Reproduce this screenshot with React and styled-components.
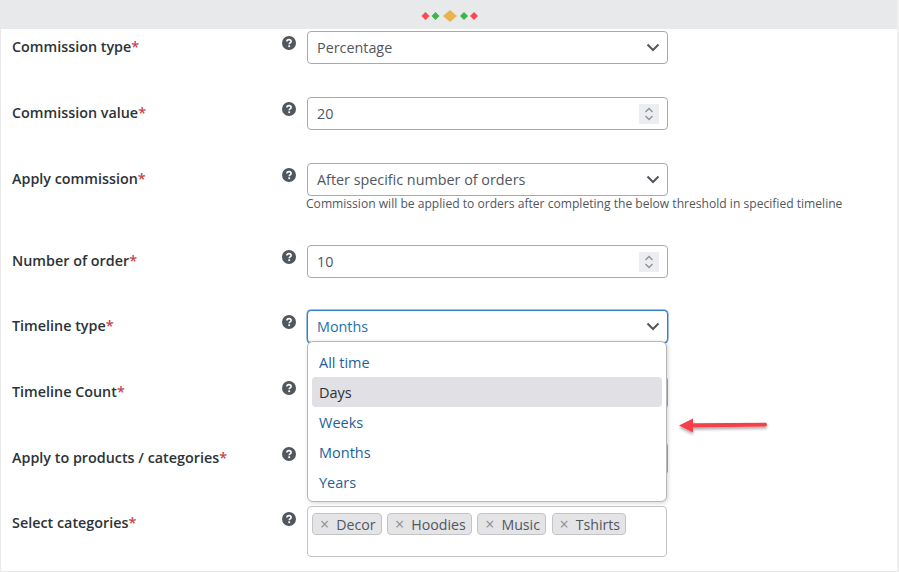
import React from "react";
import styled, { createGlobalStyle } from "styled-components";

const Global = createGlobalStyle`
  html, body {
    margin: 0;
    padding: 0;
    background: #fff;
  }
  body {
    font-family: "Open Sans", "Noto Sans", sans-serif;
    color: #2c3338;
  }
`;

const Page = styled.div`
  position: relative;
  width: 899px;
  height: 572px;
  box-sizing: border-box;
  overflow: hidden;
  border-left: 1px solid #e8e9eb;
  border-right: 2px solid #f0f0f1;
  border-bottom: 1px solid #e8e9eb;
`;

const TopBar = styled.div`
  display: flex;
  align-items: center;
  justify-content: center;
  box-sizing: border-box;
  height: 29px;
  margin: 0 -2px 0 -1px;
  padding-top: 3px;
  background: #e8e9eb;
`;

const Form = styled.div`
  display: flex;
  flex-direction: column;
  padding: 2px 0 0 11px;
`;

const Row = styled.div`
  display: grid;
  grid-template-columns: 270px 25px 361px;
  margin-bottom: ${(p) => p.$gap ?? 33}px;
`;

const Label = styled.div`
  font-size: 14.35px;
  font-weight: 600;
  line-height: 19px;
  padding-top: 6px;
  color: #2c3338;
`;

const Req = styled.span`
  color: #c9424a;
`;

const HelpWrap = styled.div`
  padding-top: 5px;
  line-height: 0;
`;

const FieldCol = styled.div`
  position: relative;
  display: flex;
  flex-direction: column;
`;

const Field = styled.div`
  display: flex;
  align-items: center;
  justify-content: space-between;
  box-sizing: border-box;
  height: 33px;
  padding: 0 6px 0 9px;
  background: #fff;
  border: 1px solid ${(p) => (p.$focus ? "#3582c4" : "#a7aaad")};
  border-radius: 4px;
  box-shadow: ${(p) => (p.$focus ? "0 0 0 0.5px #3582c4" : "none")};
  font-size: 14.35px;
  color: ${(p) => (p.$focus ? "#2271b1" : "#50575e")};
`;

const Note = styled.div`
  margin: 0 -200px 0 -1px;
  font-size: 12.1px;
  line-height: 16px;
  color: #50575e;
`;

const Spinner = styled.div`
  display: flex;
  align-items: center;
  justify-content: center;
  width: 20px;
  height: 20px;
  margin-right: 2px;
  background: #ecedf1;
`;

const Menu = styled.div`
  position: absolute;
  top: 31px;
  left: 0;
  z-index: 2;
  box-sizing: border-box;
  width: 360px;
  height: 161px;
  padding: 5px 4px;
  background: #fff;
  border: 1px solid #b4b6b9;
  border-radius: 6px;
  box-shadow: 1px 1px 4px rgba(0, 0, 0, 0.18);
`;

const Option = styled.div`
  display: flex;
  align-items: center;
  box-sizing: border-box;
  height: 30px;
  padding-left: 7px;
  border-radius: 4px;
  font-size: 14.5px;
  color: ${(p) => (p.$active ? "#2c3338" : "#1f5f99")};
  background: ${(p) => (p.$active ? "#e0e0e5" : "transparent")};
`;

const TagBox = styled.div`
  display: flex;
  align-items: flex-start;
  gap: 5.5px;
  box-sizing: border-box;
  width: 360px;
  height: 51px;
  margin-top: -1px;
  padding: 6px 4px;
  border: 1px solid #c3c4c7;
  border-radius: 4px;
`;

const Tag = styled.div`
  display: flex;
  align-items: center;
  gap: 7px;
  box-sizing: border-box;
  height: 22px;
  padding: 0 5px 0 7px;
  background: #e4e4e6;
  border: 1px solid #c3c4c7;
  border-radius: 4px;
  font-size: 14.2px;
  color: #50575e;
`;

const TagX = styled.span`
  font-size: 16px;
  line-height: 1;
  color: #8c8f94;
`;

const Pointer = styled.svg`
  position: absolute;
  left: 672px;
  top: 412px;
  z-index: 3;
`;

const Help = () => (
  <svg width="14" height="14" viewBox="0 0 14 14">
    <circle cx="7" cy="7" r="7" fill="#50575e" />
    <path
      d="M4.900 5.500C4.900 4.300 5.800 3.600 7 3.600c1.200 0 2.100.7 2.100 1.800 0 1.500-1.900 1.500-1.900 2.800"
      fill="none"
      stroke="#fff"
      strokeWidth="1.600"
    />
    <rect x="6.300" y="9.300" width="1.800" height="1.800" fill="#fff" />
  </svg>
);

const Chevron = () => (
  <svg width="14" height="9" viewBox="0 0 14 9" style={{ marginRight: 1 }}>
    <path d="M1.500 1.500L7 7l5.500-5.500" fill="none" stroke="#50575e" strokeWidth="2" />
  </svg>
);

const SpinIcon = () => (
  <svg width="10" height="16" viewBox="0 0 10 16">
    <path
      d="M1.500 6L5 2.500 8.500 6M1.500 10L5 13.500 8.500 10"
      fill="none"
      stroke="#8c8f94"
      strokeWidth="1.300"
    />
  </svg>
);

const Diamonds = () => (
  <svg width="58" height="14" viewBox="0 0 58 14">
    <path d="M4.500 3L8.500 7 4.500 11 .5 7z" fill="#f9484f" />
    <path d="M14.500 3L18.500 7 14.500 11 10.500 7z" fill="#3cb54a" />
    <path d="M29 1L36 7 29 13 22 7z" fill="#e9b44c" />
    <path d="M43 3L47 7 43 11 39 7z" fill="#3cb54a" />
    <path d="M53 3L57 7 53 11 49 7z" fill="#f9484f" />
  </svg>
);

const SelectField = ({ value, focus }) => (
  <Field $focus={focus}>
    {value}
    <Chevron />
  </Field>
);

const NumberField = ({ value }) => (
  <Field>
    {value}
    <Spinner>
      <SpinIcon />
    </Spinner>
  </Field>
);

const FormRow = ({ label, gap, children }) => (
  <Row $gap={gap}>
    <Label>
      {label}
      <Req>*</Req>
    </Label>
    <HelpWrap>
      <Help />
    </HelpWrap>
    <FieldCol>{children}</FieldCol>
  </Row>
);

const options = ["All time", "Days", "Weeks", "Months", "Years"];
const tags = ["Decor", "Hoodies", "Music", "Tshirts"];

export default function App() {
  return (
    <>
      <Global />
      <Page>
        <TopBar>
          <Diamonds />
        </TopBar>
        <Form>
          <FormRow label="Commission type">
            <SelectField value="Percentage" />
          </FormRow>
          <FormRow label="Commission value">
            <NumberField value="20" />
          </FormRow>
          <FormRow label="Apply commission">
            <SelectField value="After specific number of orders" />
            <Note>
              Commission will be applied to orders after completing the below threshold in specified
              timeline
            </Note>
          </FormRow>
          <FormRow label="Number of order" gap={32}>
            <NumberField value="10" />
          </FormRow>
          <FormRow label="Timeline type">
            <SelectField value="Months" focus />
            <Menu>
              {options.map((o) => (
                <Option key={o} $active={o === "Days"}>
                  {o}
                </Option>
              ))}
            </Menu>
          </FormRow>
          {/* these two are covered by the open menu, only their right edge shows */}
          <FormRow label="Timeline Count">
            <Field />
          </FormRow>
          <FormRow label="Apply to products / categories" gap={32}>
            <Field />
          </FormRow>
          <FormRow label="Select categories" gap={0}>
            <TagBox>
              {tags.map((t) => (
                <Tag key={t}>
                  <TagX>×</TagX>
                  {t}
                </Tag>
              ))}
            </TagBox>
          </FormRow>
        </Form>
        <Pointer width="100" height="26" viewBox="0 0 100 26">
          <defs>
            <filter id="sh" x="-10%" y="-50%" width="120%" height="220%">
              <feDropShadow dx="0" dy="2" stdDeviation="1.500" floodColor="#000" floodOpacity="0.35" />
            </filter>
          </defs>
          <path
            d="M6 13.500L20 6.500V11.200L93 10.800Q95 12.500 93 14.500L20 15.500V20.500z"
            fill="#f4414a"
            filter="url(#sh)"
          />
        </Pointer>
      </Page>
    </>
  );
}
